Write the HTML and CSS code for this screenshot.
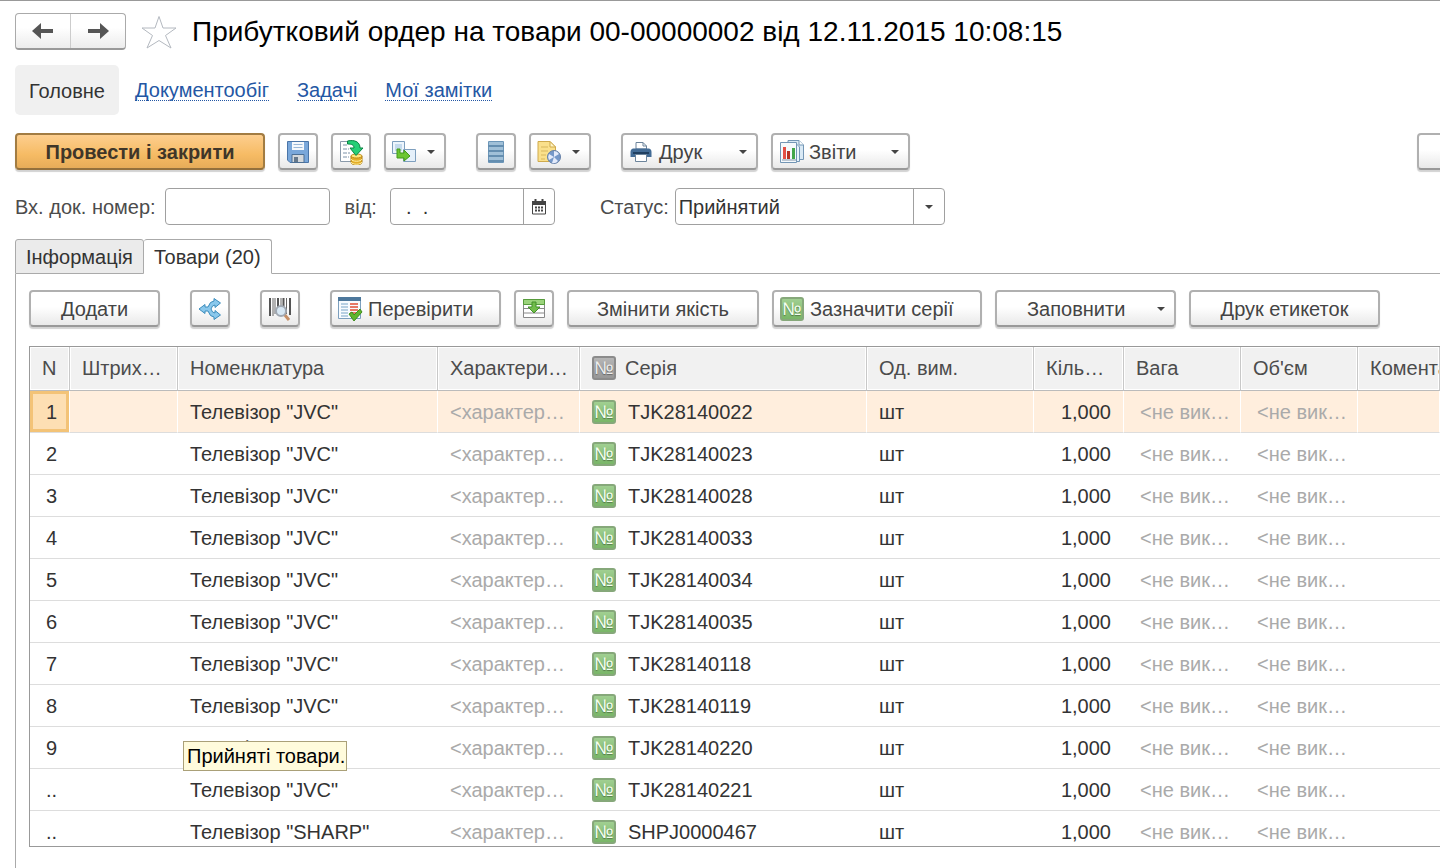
FILE: index.html
```html
<!DOCTYPE html>
<html lang="uk">
<head>
<meta charset="utf-8">
<meta name="viewport" content="width=device-width, initial-scale=1">
<title>Прибутковий ордер на товари</title>
<link rel="stylesheet" href="styles.css">
</head>
<body>
<main class="window">
  <header class="title-bar">
    <div class="history">
      <button type="button" aria-label="Назад"><svg width="22" height="18" viewBox="0 0 22 18"><path d="M0 9 9 1V7H21V11H9V17Z" fill="#555"/></svg></button>
      <button type="button" aria-label="Вперед"><svg width="22" height="18" viewBox="0 0 22 18"><path d="M22 9 13 1V7H1V11H13V17Z" fill="#555"/></svg></button>
    </div>
    <button type="button" class="star" aria-label="Обране"><svg width="36" height="34" viewBox="0 0 36 34"><path d="M18 1.500 22 13H35L24.500 20.500 30 33 18 25.500 6 33 11.500 20.500 1 13H14Z" fill="#fff" stroke="#b4b9c0"/></svg></button>
    <h1>Прибутковий ордер на товари 00-00000002 від 12.11.2015 10:08:15</h1>
  </header>

  <nav class="sections">
    <a class="current" href="#main">Головне</a>
    <a href="#flow">Документообіг</a>
    <a href="#tasks">Задачі</a>
    <a href="#notes">Мої замітки</a>
  </nav>

  <div class="toolbar">
    <button type="button" class="btn primary">Провести і закрити</button>
    <button type="button" class="btn icon" aria-label="Записати"><svg width="24" height="24" viewBox="0 0 24 24"><path d="M1.500 1.500H22.500V22.500H4L1.500 20Z" fill="#79a7da" stroke="#4a75a8"/><path d="M6 2H18V10H6Z" fill="#f5f9fd"/><path d="M7.500 4.500H16.500M7.500 7.500H16.500" stroke="#9ab8d8"/><path d="M6 14.500H18V22.500H6Z" fill="#d3d8dc" stroke="#4c6f94"/><path d="M8 17H12V22H8Z" fill="#65788b"/></svg></button>
    <button type="button" class="btn icon" aria-label="Провести"><svg width="26" height="26" viewBox="0 0 26 26"><path d="M2.500 2.500H18.500V22.500H2.500Z" fill="#fff" stroke="#8a9aaa"/><path d="M5 6H10M5 10H11M5 14H12M5 18H11" stroke="#7d92a8" stroke-dasharray="4 1"/><path d="M13 17V23C13 27 24 27 24 23V17Z" fill="#e3ad28" stroke="#ad7c12"/><path d="M13 20C14 23 23 23 24 20M13 23C14 26 23 26 24 23" fill="none" stroke="#fff0a4"/><ellipse cx="18.500" cy="17" rx="5.500" ry="2" fill="#ffe77d" stroke="#bd8b1b"/><path d="M9.500 2C17 .5 22 3 22 9H25L18 16.500 12 9H16C16 6 14 5 9.500 5Z" fill="#25cf76" stroke="#0b8443"/></svg></button>
    <button type="button" class="btn drop" aria-label="Створити на підставі"><svg width="26" height="24" viewBox="0 0 26 24"><path d="M1.500 1.500H13.500V13.500H1.500Z" fill="#edf5fc" stroke="#7e9fbe"/><path d="M4 4H11V11H4Z" fill="#c4daed"/><path d="M12.500 9.500H24.500V21.500H12.500Z" fill="#e5f0fa" stroke="#7e9fbe"/><path d="M6 9H9V13H13V10L19 16 13 21V18H6Z" fill="#6cc633" stroke="#419a1b"/></svg><i class="caret"></i></button>
    <button type="button" class="btn icon group" aria-label="Реєстр"><svg width="18" height="24" viewBox="0 0 18 24"><rect x="1" y="1" width="16" height="22" rx="1" fill="#6c96b8"/><path d="M2 3.500H16M2 8.500H16M2 13.500H16M2 18.500H16" stroke="#a0c0d8" stroke-width="3"/><path d="M1 6H17M1 11H17M1 16H17M1 21H17" stroke="#5c86a8"/></svg></button>
    <button type="button" class="btn drop" aria-label="Нагадування"><svg width="26" height="26" viewBox="0 0 26 26"><path d="M2 2.500H14L19.500 8V22.500H2Z" fill="#fae08b" stroke="#cfaa4d"/><path d="M14 2.500V8H19.500Z" fill="#fff5c7" stroke="#cfaa4d"/><path d="M5 8H12M5 12H12M5 16H10M5 20H9" stroke="#d8b75d"/><circle cx="18" cy="18" r="6.500" fill="#7598c9" stroke="#6680a7"/><path d="M18 18V12A6 6 0 0 1 23 15ZM18 18 13 15A6 6 0 0 0 13 21ZM18 18 16 24A6 6 0 0 0 22 22Z" fill="#e3eafa"/></svg><i class="caret"></i></button>
    <button type="button" class="btn print group"><svg width="22" height="22" viewBox="0 0 22 22"><path d="M6 8V1.500H13L16.500 5V8Z" fill="#fff" stroke="#6c849b"/><path d="M13 1.500V5H16.500" fill="none" stroke="#6c849b"/><path d="M3 7.500H19Q21.500 8 21.500 11V16H.5V11Q.5 8 3 7.500Z" fill="#426b95"/><path d="M3 12H19" stroke="#203f60" stroke-width="2"/><path d="M5.500 13.500H16.500V20.500H5.500Z" fill="#fff" stroke="#6c849b"/></svg><span>Друк</span><i class="caret"></i></button>
    <button type="button" class="btn reports"><svg width="26" height="26" viewBox="0 0 26 26"><path d="M9 1.500H20L24.500 6V20.500H9Z" fill="#d9e9f5" stroke="#7396b5"/><path d="M20 1.500V6H24.500" fill="#fff" stroke="#7396b5"/><path d="M5 3.500H16L20.500 8V22.500H5Z" fill="#e8f3fb" stroke="#7396b5"/><path d="M1.500 3.500H17.500V23.500H1.500Z" fill="#f4f9fc" stroke="#7396b5"/><path d="M4 8V20H7V8Z" fill="#e35046"/><path d="M8 12V20H11V12Z" fill="#b83224"/><path d="M13 9V20H16V9Z" fill="#42a64b"/><path d="M3 21H17" stroke="#8196a9"/></svg><span>Звіти</span><i class="caret"></i></button>
    <button type="button" class="btn more" aria-label="Ще"></button>
  </div>

  <form class="fields">
    <label for="number">Вх. док. номер:</label>
    <input id="number" class="number" type="text">
    <label class="date-label" for="date">від:</label>
    <div class="combo date">
      <input id="date" type="text" value="  .  .">
      <button type="button" aria-label="Календар"><svg width="14" height="16" viewBox="0 0 14 16"><path d="M.5 2.500H13.500V15H.5Z" fill="#fff" stroke="#444"/><path d="M0 2H14V6H0Z" fill="#444"/><path d="M3.500 0V4M10.500 0V4" stroke="#444" stroke-width="2"/><path d="M3 8.500H12M3 11.500H12" stroke="#444" stroke-width="2" stroke-dasharray="2 1"/></svg></button>
    </div>
    <label class="status-label" for="status">Статус:</label>
    <div class="combo status">
      <select id="status"><option>Прийнятий</option></select>
      <span class="arrow"><i class="caret"></i></span>
    </div>
  </form>

  <div class="tabs" role="tablist">
    <button type="button" role="tab" aria-selected="false">Інформація</button>
    <button type="button" role="tab" aria-selected="true">Товари (20)</button>
  </div>

  <section class="panel">
    <div class="toolbar">
      <button type="button" class="btn add">Додати</button>
      <button type="button" class="btn icon group" aria-label="Розбити рядок"><svg width="24" height="24" viewBox="0 0 24 24"><path d="M1 12 7 7.500V10H10Q12 4 16 4V1.500L22.500 6 17 10.500V8Q14 8 13 12 14 16 17 16V13.500L22.500 18 16 22.500V20Q12 20 10 14H7V16.500Z" fill="#8ac8ec" stroke="#3b8cbc"/></svg></button>
      <button type="button" class="btn icon group" aria-label="Пошук за штрихкодом"><svg width="24" height="24" viewBox="0 0 24 24"><path d="M2 1V19M10 1V18M15.500 1V18M22 1V18" stroke="#555" stroke-width="2"/><path d="M5 1V19M7 1V17M13 1V17M18.500 1V17" stroke="#666"/><path d="M16 17 21 23" stroke="#c69068" stroke-width="3"/><circle cx="13" cy="14" r="5" fill="#d8e8f4" stroke="#a0a8b2" stroke-width="2"/></svg></button>
      <button type="button" class="btn check group"><svg width="26" height="26" viewBox="0 0 26 26"><path d="M1.500 2.500H23.500V22.500H1.500Z" fill="#f7fbff" stroke="#7c9fbe"/><path d="M1 1H24V5H1Z" fill="#4d789c"/><path d="M4 8H11M4 11H11M4 14H11M4 17H11M4 20H11" stroke="#78a4c7"/><path d="M13 8H21M13 11H21M13 14H21M13 17H21" stroke="#e67967" stroke-width="2"/><path d="M12 18 15 16 17 19 23 13 25 16 17 25Z" fill="#61b52c" stroke="#3d8e1d"/></svg><span>Перевірити</span></button>
      <button type="button" class="btn icon" aria-label="Заповнити рядки"><svg width="24" height="24" viewBox="0 0 24 24"><path d="M1.500 2.500H22.500V20.500H1.500Z" fill="#fff" stroke="#888"/><path d="M1.500 2.500H22.500V7.500H1.500Z" fill="#9bd37c" stroke="#579c3c"/><path d="M2 11.500H22M2 16H22" stroke="#888"/><path d="M10 5H14V10H18L12 16 6 10H10Z" fill="#72bd4b" stroke="#43902b"/></svg></button>
      <button type="button" class="btn quality">Змінити якість</button>
      <button type="button" class="btn series"><b class="no">№</b><span>Зазначити серії</span></button>
      <button type="button" class="btn fill"><span>Заповнити</span><i class="caret"></i></button>
      <button type="button" class="btn labels">Друк етикеток</button>
    </div>

    <div class="grid">
      <table>
        <colgroup><col class="c-n"><col class="c-code"><col class="c-name"><col class="c-char"><col class="c-series"><col class="c-unit"><col class="c-qty"><col class="c-opt"><col class="c-opt"><col></colgroup>
        <thead><tr><th>N</th><th>Штрих…</th><th>Номенклатура</th><th>Характери…</th><th><b class="no gray">№</b>Серія</th><th>Од. вим.</th><th>Кіль…</th><th>Вага</th><th>Об'єм</th><th>Коментар</th></tr></thead>
        <tbody>
          <tr class="selected"><td>1</td><td></td><td>Телевізор "JVC"</td><td>&lt;характер…</td><td><b class="no">№</b>TJK28140022</td><td>шт</td><td>1,000</td><td>&lt;не вик…</td><td>&lt;не вик…</td><td></td></tr>
          <tr><td>2</td><td></td><td>Телевізор "JVC"</td><td>&lt;характер…</td><td><b class="no">№</b>TJK28140023</td><td>шт</td><td>1,000</td><td>&lt;не вик…</td><td>&lt;не вик…</td><td></td></tr>
          <tr><td>3</td><td></td><td>Телевізор "JVC"</td><td>&lt;характер…</td><td><b class="no">№</b>TJK28140028</td><td>шт</td><td>1,000</td><td>&lt;не вик…</td><td>&lt;не вик…</td><td></td></tr>
          <tr><td>4</td><td></td><td>Телевізор "JVC"</td><td>&lt;характер…</td><td><b class="no">№</b>TJK28140033</td><td>шт</td><td>1,000</td><td>&lt;не вик…</td><td>&lt;не вик…</td><td></td></tr>
          <tr><td>5</td><td></td><td>Телевізор "JVC"</td><td>&lt;характер…</td><td><b class="no">№</b>TJK28140034</td><td>шт</td><td>1,000</td><td>&lt;не вик…</td><td>&lt;не вик…</td><td></td></tr>
          <tr><td>6</td><td></td><td>Телевізор "JVC"</td><td>&lt;характер…</td><td><b class="no">№</b>TJK28140035</td><td>шт</td><td>1,000</td><td>&lt;не вик…</td><td>&lt;не вик…</td><td></td></tr>
          <tr><td>7</td><td></td><td>Телевізор "JVC"</td><td>&lt;характер…</td><td><b class="no">№</b>TJK28140118</td><td>шт</td><td>1,000</td><td>&lt;не вик…</td><td>&lt;не вик…</td><td></td></tr>
          <tr><td>8</td><td></td><td>Телевізор "JVC"</td><td>&lt;характер…</td><td><b class="no">№</b>TJK28140119</td><td>шт</td><td>1,000</td><td>&lt;не вик…</td><td>&lt;не вик…</td><td></td></tr>
          <tr><td>9</td><td></td><td>Телевізор "JVC"</td><td>&lt;характер…</td><td><b class="no">№</b>TJK28140220</td><td>шт</td><td>1,000</td><td>&lt;не вик…</td><td>&lt;не вик…</td><td></td></tr>
          <tr><td>..</td><td></td><td>Телевізор "JVC"</td><td>&lt;характер…</td><td><b class="no">№</b>TJK28140221</td><td>шт</td><td>1,000</td><td>&lt;не вик…</td><td>&lt;не вик…</td><td></td></tr>
          <tr><td>..</td><td></td><td>Телевізор "SHARP"</td><td>&lt;характер…</td><td><b class="no">№</b>SHPJ0000467</td><td>шт</td><td>1,000</td><td>&lt;не вик…</td><td>&lt;не вик…</td><td></td></tr>
        </tbody>
      </table>
      <div class="tooltip" role="tooltip">Прийняті товари.</div>
    </div>
  </section>
</main>
</body>
</html>
```

FILE: styles.css
```css
* { box-sizing: border-box; }

body {
  margin: 0;
  background: #fff;
  color: #333;
  font: 20px/24px "Liberation Sans", Arial, sans-serif;
  overflow: hidden;
}

button, input, select { font: inherit; color: inherit; }
button { padding: 0; cursor: pointer; white-space: nowrap; }
svg { display: block; flex: none; }

.window {
  display: flex;
  flex-direction: column;
  min-height: 100vh;
  padding-left: 15px;
  border-top: 1px solid #999;
  overflow: hidden;
}

.title-bar { display: flex; align-items: center; padding-top: 12px; }

.history {
  display: flex;
  width: 111px;
  height: 37px;
  border: 1px solid #aaa;
  border-bottom: 2px solid #999;
  border-radius: 4px;
  background: linear-gradient(#fff 40%, #ececec);
}
.history button {
  flex: 1;
  display: grid;
  place-items: center;
  border: 0;
  background: none;
}
.history button + button { border-left: 1px solid #ccc; }

.star { margin: 0 15px; border: 0; background: none; }

h1 {
  margin: 0;
  color: #000;
  font-size: 28px;
  font-weight: 400;
  line-height: 36px;
  white-space: nowrap;
}

.sections { display: flex; align-items: center; gap: 28px; margin-top: 15px; }
.sections a {
  color: #2457a4;
  line-height: 20px;
  text-decoration: none;
  border-bottom: 1px dotted #2457a4;
}
.sections .current {
  margin-right: -12px;
  padding: 16px 14px 14px;
  border: 0;
  border-radius: 5px;
  background: #f0f0f0;
  color: #333;
}

.toolbar { display: flex; gap: 13px; }
.window > .toolbar { margin-top: 18px; }

.btn {
  flex: none;
  display: flex;
  align-items: center;
  justify-content: center;
  height: 37px;
  border: 2px solid #b0b0b0;
  border-bottom-color: #999;
  border-radius: 4px;
  background: linear-gradient(#fff 45%, #e9e9e9);
  box-shadow: 0 2px 1px #d2d2d2;
  color: #444;
}
.group { margin-left: 17px; }
.icon { width: 40px; }
.drop { width: 62px; padding: 0 9px 0 5px; justify-content: space-between; }
.primary {
  width: 250px;
  border-color: #a27c42;
  border-bottom-color: #93703c;
  background: linear-gradient(#fdce8e, #f6bb64 60%, #e6ac59);
  color: #3f3629;
  font-weight: 700;
}
.print { width: 137px; padding: 0 9px 0 7px; gap: 7px; }
.reports { width: 139px; padding: 0 9px 0 6px; gap: 4px; }
.print .caret, .reports .caret { margin-left: auto; }
.more { width: 60px; margin-left: auto; margin-right: -37px; }

.caret {
  flex: none;
  border: 4px solid transparent;
  border-top-color: #444;
  border-bottom: 0;
}

.fields { display: flex; align-items: center; margin-top: 18px; color: #4c4c4c; }
.number, .combo {
  height: 37px;
  border: 1px solid #a0a0a0;
  border-radius: 4px;
  background: #fff;
}
.number { width: 165px; margin-left: 9px; padding: 0 4px; }
.date-label { margin-left: 15px; }
.status-label { margin-left: 45px; }
.combo { display: grid; grid-template-columns: 1fr 31px; color: #333; overflow: hidden; }
.combo input, .combo select {
  min-width: 0;
  border: 0;
  background: none;
  outline: 0;
}
.combo button, .arrow {
  display: grid;
  place-items: center;
  border: 0;
  border-left: 1px solid #a0a0a0;
  background: none;
}
.date { width: 165px; margin-left: 13px; }
.date input { padding: 0 4px; white-space: pre; }
.status { width: 270px; margin-left: 6px; }
.status select { grid-area: 1 / 1 / 2 / 3; padding: 0 3px; appearance: none; }
.arrow { grid-area: 1 / 2; pointer-events: none; }

.tabs { display: flex; margin-top: 14px; }
.tabs button {
  height: 35px;
  padding: 0 10px;
  border: 1px solid #aaa;
  border-radius: 3px 3px 0 0;
  background: #ebebeb;
}
.tabs button + button { border-left: 0; }
.tabs [aria-selected="true"] { border-bottom-color: #fff; background: #fff; }
.tabs::after { content: ""; flex: 1; border-bottom: 1px solid #aaa; }

.panel { flex: 1; padding: 16px 0 21px 13px; border-left: 1px solid #aaa; }
.add { width: 131px; }
.check { width: 171px; padding-left: 5px; gap: 5px; justify-content: flex-start; }
.quality { width: 192px; }
.series { width: 210px; padding-left: 6px; gap: 6px; justify-content: flex-start; }
.fill { width: 181px; padding: 0 9px 0 30px; justify-content: space-between; }
.labels { width: 191px; }

.grid {
  position: relative;
  margin-top: 19px;
  border: solid #999;
  border-width: 1px 0 1px 1px;
}
table { width: 100%; border-collapse: separate; border-spacing: 0; table-layout: fixed; }
.c-n { width: 40px; }
.c-code { width: 108px; }
.c-name { width: 260px; }
.c-char { width: 142px; }
.c-series { width: 287px; }
.c-unit { width: 167px; }
.c-qty { width: 90px; }
.c-opt { width: 117px; }

th, td { padding: 9px 13px 7px 12px; overflow: hidden; white-space: nowrap; text-align: left; }
th {
  height: 44px;
  padding: 9px 8px 10px 12px;
  border-right: 1px solid #c8c8c8;
  border-bottom: 1px solid #bbb;
  background: #f1f1f1;
  box-shadow: inset 0 0 0 1px #fff;
  color: #4c4c4c;
  font-weight: 400;
}
td { height: 42px; border-bottom: 1px solid #ddd; line-height: 25px; }
td:nth-child(1), td:nth-child(7) { text-align: right; }
td:nth-child(4), td:nth-child(8), td:nth-child(9) { padding-right: 8px; color: #aaa; }
td:nth-child(8), td:nth-child(9) { padding-left: 16px; }
tbody tr:last-child td { height: 35px; padding-bottom: 1px; border-bottom: 0; }

.selected td { padding-right: 12px; background: #ffeedd; border-right: 1px solid #fff; }
.selected td:nth-child(1) {
  background: #fddfb3;
  box-shadow: inset 0 0 0 3px #f3c377;
}

.no {
  display: inline-block;
  flex: none;
  width: 24px;
  height: 24px;
  margin-right: 12px;
  border: 2px solid #86a87a;
  border-radius: 3px;
  background: linear-gradient(#a0cf91, #79b668);
  color: #f4fff0;
  font-size: 18px;
  font-weight: 400;
  line-height: 20px;
  text-align: center;
  text-shadow: 0 1px 1px #557a48;
  vertical-align: top;
}
.no.gray {
  margin-right: 9px;
  border-color: #8b8b8b;
  background: linear-gradient(#b5b5b5, #979797);
  color: #eee;
  text-shadow: 0 1px 1px #666;
}
.btn .no { margin: 0; }

.tooltip {
  position: absolute;
  top: 394px;
  left: 153px;
  padding: 2px 1px 2px 3px;
  border: 1px solid #aaa078;
  background: #fffbdc;
  color: #000;
}
```
